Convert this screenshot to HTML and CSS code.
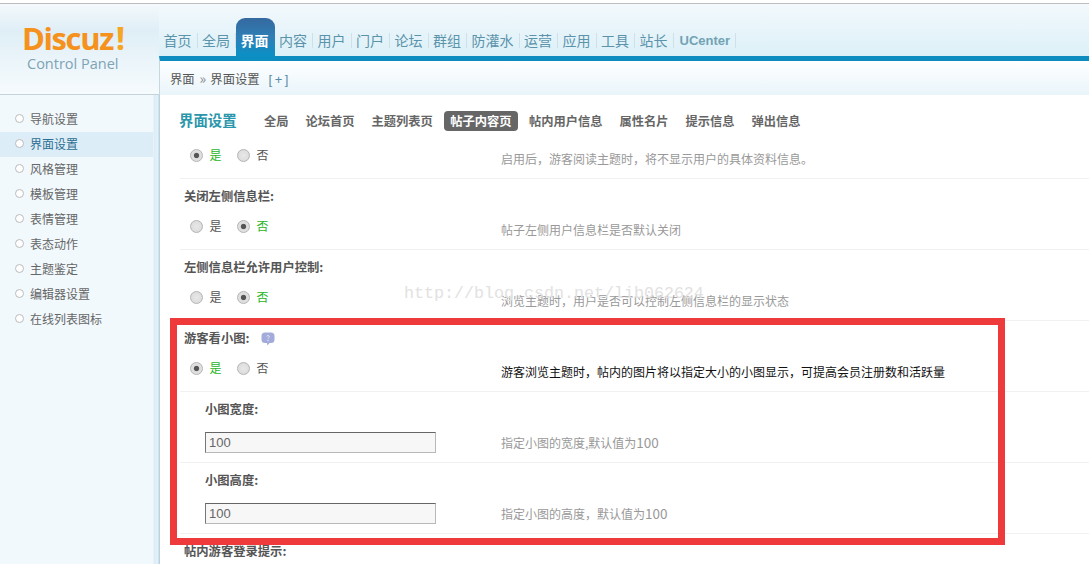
FILE: index.html
```html
<!DOCTYPE html>
<html lang="zh-CN">
<head>
<meta charset="utf-8">
<title>Discuz! Control Panel</title>
<link rel="stylesheet" href="styles.css">
</head>
<body>
<div class="app">
  <div class="topline"></div>
  <header class="top">
    <div class="brand">
      <div class="logo">Discuz<span class="bang">!</span></div>
      <div class="sub">Control Panel</div>
    </div>
    <div class="navcol">
      <nav class="nav">
        <a class="item"><span>首页</span></a>
        <a class="item"><span>全局</span></a>
        <a class="item active"><span>界面</span></a>
        <a class="item"><span>内容</span></a>
        <a class="item"><span>用户</span></a>
        <a class="item"><span>门户</span></a>
        <a class="item"><span>论坛</span></a>
        <a class="item"><span>群组</span></a>
        <a class="item"><span>防灌水</span></a>
        <a class="item"><span>运营</span></a>
        <a class="item"><span>应用</span></a>
        <a class="item"><span>工具</span></a>
        <a class="item"><span>站长</span></a>
        <a class="item latin"><span>UCenter</span></a>
      </nav>
      <div class="crumb">界面<i class="sep">»</i>界面设置<b class="plus">[+]</b></div>
    </div>
  </header>
  <div class="body">
    <aside class="side">
      <a class="sitem">导航设置</a>
      <a class="sitem on">界面设置</a>
      <a class="sitem">风格管理</a>
      <a class="sitem">模板管理</a>
      <a class="sitem">表情管理</a>
      <a class="sitem">表态动作</a>
      <a class="sitem">主题鉴定</a>
      <a class="sitem">编辑器设置</a>
      <a class="sitem">在线列表图标</a>
    </aside>
    <main class="main">
      <div class="tabs">
        <h3 class="title">界面设置</h3>
        <div class="tablist">
          <a class="tab">全局</a>
          <a class="tab">论坛首页</a>
          <a class="tab">主题列表页</a>
          <a class="tab current">帖子内容页</a>
          <a class="tab">帖内用户信息</a>
          <a class="tab">属性名片</a>
          <a class="tab">提示信息</a>
          <a class="tab">弹出信息</a>
        </div>
      </div>
      <div class="field first">
        <div class="radios">
          <label class="opt sel"><input type="radio" name="a" checked>是</label>
          <label class="opt"><input type="radio" name="a">否</label>
        </div>
        <p class="desc">启用后，游客阅读主题时，将不显示用户的具体资料信息。</p>
      </div>
      <div class="label">关闭左侧信息栏:</div>
      <div class="field">
        <div class="radios">
          <label class="opt"><input type="radio" name="b">是</label>
          <label class="opt sel"><input type="radio" name="b" checked>否</label>
        </div>
        <p class="desc">帖子左侧用户信息栏是否默认关闭</p>
      </div>
      <div class="label">左侧信息栏允许用户控制:</div>
      <div class="field">
        <div class="radios">
          <label class="opt"><input type="radio" name="c">是</label>
          <label class="opt sel"><input type="radio" name="c" checked>否</label>
        </div>
        <p class="desc">浏览主题时，用户是否可以控制左侧信息栏的显示状态</p>
      </div>
      <div class="label">游客看小图:
        <svg class="help" viewBox="0 0 14 14" width="14" height="14"><path d="M4 .5h6A3.500 3.500 0 0 1 13.500 4v3.500A3.500 3.500 0 0 1 10 11H8.500L6.500 13.500 6 11H4A3.500 3.500 0 0 1 .5 7.500V4A3.500 3.500 0 0 1 4 .5z" fill="#a3abdb"/><path d="M5.500 4.300C5.800 3.400 8.300 3.300 8.400 4.700 8.500 5.700 7 5.700 7 6.800" fill="none" stroke="#e4e6f6" stroke-width="1"/><circle cx="7" cy="8.500" r=".7" fill="#e4e6f6"/></svg>
      </div>
      <div class="field">
        <div class="radios">
          <label class="opt sel"><input type="radio" name="d" checked>是</label>
          <label class="opt"><input type="radio" name="d">否</label>
        </div>
        <p class="desc dark">游客浏览主题时，帖内的图片将以指定大小的小图显示，可提高会员注册数和活跃量</p>
      </div>
      <div class="label sub-label">小图宽度:</div>
      <div class="field input-field">
        <input class="text" type="text" value="100">
        <p class="desc">指定小图的宽度,默认值为<span class="num">100</span></p>
      </div>
      <div class="label sub-label">小图高度:</div>
      <div class="field input-field">
        <input class="text" type="text" value="100">
        <p class="desc">指定小图的高度，默认值为<span class="num">100</span></p>
      </div>
      <div class="label">帖内游客登录提示:</div>
    </main>
  </div>
  <div class="watermark">http://blog.csdn.net/lib062624</div>
  <div class="redframe"></div>
</div>
</body>
</html>
```
FILE: styles.css
```css
* { box-sizing: border-box; }
html, body { margin: 0; padding: 0; }
body {
  font-family: "Noto Sans CJK SC", "Liberation Sans", sans-serif;
  font-size: 12px;
  color: #666;
  background: #fff;
}
.app { position: relative; width: 1089px; height: 564px; overflow: hidden; display: flex; flex-direction: column; }
.topline { height: 4px; flex: none; background: #fff; border-bottom: 1px solid #bdbdbd; }

.top { display: flex; height: 91px; flex: none; }
.brand {
  width: 159px; flex: none;
  border-bottom: 1px solid #c4d3da;
  background: linear-gradient(#f4f9fc 0, #dfeef6 30%, #e8f3f9 55%, #f6fbfd 100%);
  padding: 17px 0 0 22px;
}
.logo {
  font-family: "Open Sans", "Liberation Sans", sans-serif;
  font-weight: 700; font-size: 31px; line-height: 34px; letter-spacing: -1.400px;
  color: #f5921e;
  height: 34px;
}
.bang { color: #f5a623; margin-left: 3px; font-size: 33px; }
.sub {
  font-family: "Open Sans", "Liberation Sans", sans-serif;
  font-size: 14.500px; line-height: 18px; color: #7ea3b6;
  margin-left: 5px;
}
.navcol { flex: 1; display: flex; flex-direction: column; min-width: 0; }
.nav {
  height: 52px; flex: none; padding: 14px 0 0 0;
  display: flex; align-items: flex-start;
  background: linear-gradient(#f3f9fc, #dcf0f8);
}
.item {
  position: relative; z-index: 1;
  height: 43px; padding: 1px 0 0 4.500px;
  display: flex; align-items: center;
  font-size: 14px; color: #5b93ab;
  border-radius: 9px 9px 0 0;
}
.item span { display: block; line-height: 15px; padding-right: 5px; border-right: 1px solid #cfe0e8; }
.item.active {
  color: #fff; font-weight: 700;
  background: linear-gradient(#35699f 0, #2f7fb6 45%, #0c8fc4 85%, #0d8dc1 100%);
}
.item.active span { border-right-color: transparent; }
.item.latin { font-size: 13px; font-weight: 700; font-family: "Liberation Sans", sans-serif; color: #72a3b4; margin-left: 1.500px; }
.crumb {
  flex: 1;
  border-top: 5px solid #0d8cc0;
  border-bottom: 1px solid #c4d8de;
  border-left: 1px solid #c4d8de;
  background: linear-gradient(#fff, #e7f4fa);
  padding-left: 10px;
  line-height: 34px;
  font-size: 12.300px; color: #555;
}
.sep { font-style: normal; color: #888; font-size: 14px; margin: 0 4px 0 5px; }
.plus { font-weight: 400; color: #5b8aa5; font-size: 13px; letter-spacing: 2.500px; margin-left: 9px; font-family: "Liberation Sans", sans-serif; }

.body { flex: 1; display: flex; min-height: 0; }
.side {
  width: 160px; flex: none; padding-top: 12px;
  background: linear-gradient(90deg, #f1f9fd 0, #f1f9fd 153px, #dcecf6 154px, #e4f1f9 158px, #b9d3e0 159px);
}
.sitem {
  display: block; width: 153px; height: 25px;
  padding-left: 30px;
  line-height: 24px; font-size: 12px; color: #666;
  position: relative;
}
.sitem::before {
  content: ""; position: absolute; left: 15px; top: 7px;
  width: 7px; height: 7px; border: 1px solid #bbb; border-radius: 50%; background: #fff;
}
.sitem.on { background: #dcedf7; color: #2c6f92; }

.main { flex: 1; min-width: 0; padding-left: 20px; background: #fff; overflow: hidden; }
.tabs { height: 48px; padding-top: 2px; display: flex; align-items: center; }
.title { margin: 0 0 0 -1px; width: 79px; flex: none; font-size: 14.400px; font-weight: 700; color: #2a96ab; line-height: 20px; }
.tablist { display: flex; gap: 5px; padding-top: 2px; }
.tab { padding: 0 6px; height: 20px; line-height: 20px; font-size: 12.250px; font-weight: 700; color: #666; border-radius: 4px; }
.tab.current { background: #666; color: #fff; padding: 0 6.500px; }

.label {
  height: 35px; line-height: 35px; padding-left: 4px;
  font-size: 12.300px; font-weight: 700; color: #555;
  display: flex; align-items: center; gap: 12px;
}
.sub-label { padding-left: 25px; }
.help { flex: none; }
.field {
  height: 36px; display: flex; align-items: flex-start; padding-left: 10px;
  border-bottom: 1px solid #f1f1f1;
}
.radios { width: 311px; flex: none; display: flex; gap: 15.500px; height: 24px; align-items: center; }
.opt { display: flex; align-items: center; font-size: 12px; color: #555; line-height: 24px; }
.opt input {
  appearance: none; margin: 0 6.500px 0 0; width: 13px; height: 13px; border-radius: 50%;
  border: 1px solid #b4b4b4;
  background: radial-gradient(circle, #e8e8e8, #d8d8d8);
}
.opt input:checked { background: radial-gradient(circle, #555 0, #555 28%, #ddd 40%, #e4e4e4 100%); }
.opt.sel { color: #1fb51f; }
.desc { margin: 4px 0 0; line-height: 24px; font-size: 12px; color: #999; white-space: nowrap; }
.desc.dark { color: #111; }
.num { font-size: 13.500px; }
.input-field { padding: 5px 0 0 25px; }
.text {
  width: 231px; height: 21px; flex: none; margin: 0 65px 0 0; padding: 1px 3px;
  border: 1px solid #b8b8b8; border-top-color: #666; border-left-color: #777;
  background: #f7f7f7; font-family: "Liberation Sans", sans-serif; font-size: 13px; color: #666;
}
.input-field .desc { margin-top: -2px; }
.watermark {
  position: absolute; left: 404px; top: 284px;
  font-family: "Liberation Mono", monospace; font-size: 16.670px; line-height: 20px;
  color: #e2e2e2; white-space: nowrap;
}
.redframe {
  position: absolute; left: 170px; top: 318px; width: 835px; height: 227px;
  border: 7px solid #ee3a3a;
}
```
